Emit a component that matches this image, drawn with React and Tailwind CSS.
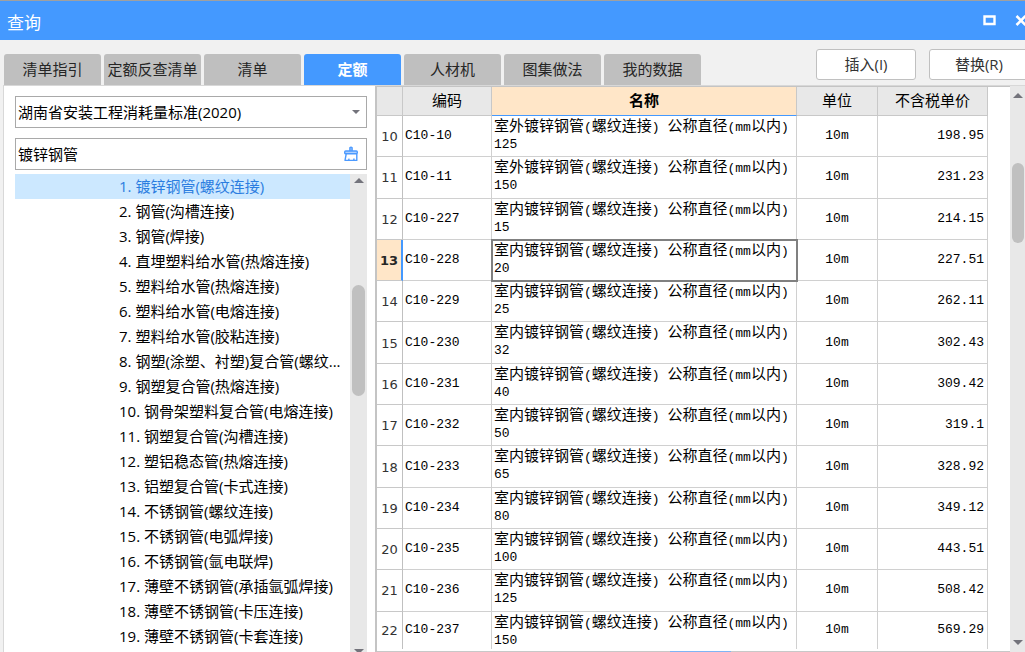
import React, { useState } from "react";

const tabs = ["清单指引", "定额反查清单", "清单", "定额", "人材机", "图集做法", "我的数据"];

const chapters = [
  "镀锌钢管(螺纹连接)",
  "钢管(沟槽连接)",
  "钢管(焊接)",
  "直埋塑料给水管(热熔连接)",
  "塑料给水管(热熔连接)",
  "塑料给水管(电熔连接)",
  "塑料给水管(胶粘连接)",
  "钢塑(涂塑、衬塑)复合管(螺纹...",
  "钢塑复合管(热熔连接)",
  "钢骨架塑料复合管(电熔连接)",
  "钢塑复合管(沟槽连接)",
  "塑铝稳态管(热熔连接)",
  "铝塑复合管(卡式连接)",
  "不锈钢管(螺纹连接)",
  "不锈钢管(电弧焊接)",
  "不锈钢管(氩电联焊)",
  "薄壁不锈钢管(承插氩弧焊接)",
  "薄壁不锈钢管(卡压连接)",
  "薄壁不锈钢管(卡套连接)",
];

const rows = [
  { no: 10, code: "C10-10", place: "室外", size: "125", price: "198.95" },
  { no: 11, code: "C10-11", place: "室外", size: "150", price: "231.23" },
  { no: 12, code: "C10-227", place: "室内", size: "15", price: "214.15" },
  { no: 13, code: "C10-228", place: "室内", size: "20", price: "227.51" },
  { no: 14, code: "C10-229", place: "室内", size: "25", price: "262.11" },
  { no: 15, code: "C10-230", place: "室内", size: "32", price: "302.43" },
  { no: 16, code: "C10-231", place: "室内", size: "40", price: "309.42" },
  { no: 17, code: "C10-232", place: "室内", size: "50", price: "319.1" },
  { no: 18, code: "C10-233", place: "室内", size: "65", price: "328.92" },
  { no: 19, code: "C10-234", place: "室内", size: "80", price: "349.12" },
  { no: 20, code: "C10-235", place: "室内", size: "100", price: "443.51" },
  { no: 21, code: "C10-236", place: "室内", size: "125", price: "508.42" },
  { no: 22, code: "C10-237", place: "室内", size: "150", price: "569.29" },
];

// Half-width characters use the mono face, Chinese keeps the larger size
function MixedText({ text }) {
  return text.split(/([\x20-\x7e]+)/).map((part, i) =>
    i % 2 === 1 ? (
      <span key={i} className="text-[13px] whitespace-pre">{part}</span>
    ) : (
      part
    )
  );
}

function Arrow({ down, className }) {
  return (
    <svg viewBox="0 0 10 5" className={className} aria-hidden="true">
      <path d={down ? "M0 0h10L5 5z" : "M0 5h10L5 0z"} fill="#73737b" />
    </svg>
  );
}

function BroomIcon() {
  return (
    <svg viewBox="0 0 16 16" className="w-4 h-4" fill="none" stroke="#4c9aff" strokeWidth="1.4" strokeLinejoin="round" aria-hidden="true">
      <path d="M6.9 5V1.800Q8 .4 9.100 1.800V5" fill="#4c9aff" fillOpacity=".5" />
      <rect x="1.700" y="5" width="12.600" height="2.800" rx="1" fill="#4c9aff" fillOpacity=".45" />
      <path d="M3.200 8L2 14.400h11.800V8M5.600 14.200l.5-1.600M10.600 14.200l.6-1.600" />
    </svg>
  );
}

function TitleBar() {
  return (
    <header className="h-10 shrink-0 flex items-center justify-between bg-[#4499ff] border-t border-[#a0a0a0] pl-[7px] text-white">
      <h1 className="text-[17px] leading-6 pt-1">查询</h1>
      <div className="flex items-center gap-[19px] -mr-0.5">
        <button type="button" aria-label="最大化" className="w-[13px] h-3">
          <svg viewBox="0 0 13 12" className="w-full h-full"><path d="M1.500 1.500h10v7.500h-10z" fill="none" stroke="white" strokeWidth="2.400" /></svg>
        </button>
        <button type="button" aria-label="关闭" className="w-3 h-3">
          <svg viewBox="0 0 12 12" className="w-full h-full"><path d="M1.500 1l9 9M10.500 1l-9 9" stroke="white" strokeWidth="2.600" /></svg>
        </button>
      </div>
    </header>
  );
}

function SidePanel() {
  const [keyword, setKeyword] = useState("镀锌钢管");
  const [current, setCurrent] = useState(0);

  return (
    <aside className="w-[363px] shrink-0 flex flex-col pl-[11px] pt-[10px]">
      <div className="relative h-8 mb-[10px] shrink-0">
        <select aria-label="定额库" className="appearance-none w-full h-full border border-[#a9a9a9] bg-white pl-0.5 pr-6">
          <option>湖南省安装工程消耗量标准(2020)</option>
        </select>
        <Arrow down className="absolute right-[7px] top-[14px] w-2 h-1 pointer-events-none" />
      </div>
      <div className="h-8 mb-1 shrink-0 flex items-center border border-[#a9a9a9] pl-0.5 pr-[7px]">
        <input
          aria-label="搜索"
          value={keyword}
          onChange={(e) => setKeyword(e.target.value)}
          className="flex-1 min-w-0 h-full pb-0.5 outline-none"
        />
        <button type="button" aria-label="清除" onClick={() => setKeyword("")}><BroomIcon /></button>
      </div>
      <div className="flex-1 min-h-0 flex">
        <ul className="flex-1 min-w-0 overflow-hidden">
          {chapters.map((name, i) => (
            <li key={name}>
              <button
                type="button"
                onClick={() => setCurrent(i)}
                className={`block w-full h-[25px] pl-[104px] pb-0.5 text-left whitespace-nowrap ${i === current ? "bg-[#cce8ff] text-[#2b7de0]" : ""}`}
              >
                {i + 1}. {name}
              </button>
            </li>
          ))}
        </ul>
        <div className="w-[17px] flex flex-col items-center bg-[#e8e8e8] pt-1">
          <Arrow className="w-[10px] h-[5px]" />
          <div className="w-[13px] h-[111px] mt-[102px] rounded-full bg-[#c0c0c0]" />
          <Arrow down className="w-[10px] h-[5px] mt-auto -mb-0.5" />
        </div>
      </div>
    </aside>
  );
}

function QuotaTable() {
  const [selected, setSelected] = useState(13);
  const head = "border-r border-b border-[#c8c8c8] bg-[#e8e8e8] font-normal pt-1";
  const cell = "border-r border-[#d0d0d0]";

  return (
    <table className="w-full h-full table-fixed border-separate border-spacing-0 font-['Liberation_Mono','Noto_Sans_CJK_SC',monospace]">
      <colgroup>
        <col className="w-[26px]" />
        <col className="w-[89px]" />
        <col />
        <col className="w-[81px]" />
        <col className="w-[110px]" />
      </colgroup>
      <thead>
        <tr className="h-[29px]">
          <th className={head} aria-label="序号" />
          <th className={head}>编码</th>
          <th className="border-r border-r-[#c8c8c8] border-b border-b-[#4499ff] bg-[#ffe6c8] font-bold pt-1">名称</th>
          <th className={head}>单位</th>
          <th className={head}>不含税单价</th>
        </tr>
      </thead>
      <tbody>
        {rows.map((row, i) => {
          const active = row.no === selected;
          const last = i === rows.length - 1;
          const line = last ? "" : "border-b";
          return (
            <tr key={row.no} onClick={() => setSelected(row.no)} className={last ? "h-[37px]" : "h-[41px]"}>
              <td
                className={`${line} border-b-[#c8c8c8] text-center text-[13px] pt-0.5 font-['DejaVu_Sans',sans-serif] ${
                  active ? "border-r-2 border-r-[#4499ff] bg-[#ffe6c8] font-bold text-[#262626]" : "border-r border-r-[#c0c0c0] text-[#333333]"
                }`}
              >
                {row.no}
              </td>
              <td className={`${cell} ${line} pl-0.5 text-[13px]`}>{row.code}</td>
              <td
                className={`${cell} ${line} pl-0.5 pt-[3px] align-top leading-[17px] whitespace-nowrap ${
                  active ? "outline-2 -outline-offset-1 outline-[#808080]" : ""
                }`}
              >
                <MixedText text={`${row.place}镀锌钢管(螺纹连接) 公称直径(mm以内)`} />
                <br />
                <MixedText text={row.size} />
              </td>
              <td className={`${cell} ${line} text-center text-[13px]`}>10m</td>
              <td className={`${cell} ${line} pr-[3px] text-right text-[13px]`}>{row.price}</td>
            </tr>
          );
        })}
      </tbody>
    </table>
  );
}

export default function App() {
  const [tab, setTab] = useState("定额");

  return (
    <div className="h-screen flex flex-col overflow-hidden bg-[#f1f1f1] text-[15px] leading-5 text-black font-['Open_Sans','Noto_Sans_CJK_SC',sans-serif]">
      <TitleBar />
      <div className="h-[45px] shrink-0 flex items-end justify-between pl-1">
        <nav className="flex gap-[3px]">
          {tabs.map((name) => (
            <button
              key={name}
              type="button"
              onClick={() => setTab(name)}
              className={`w-[97px] h-[31px] pb-0.5 rounded-t-[3px] whitespace-nowrap ${
                name === tab ? "bg-[#4499ff] text-white font-bold" : "bg-[#bfbfbf] text-[#262626]"
              }`}
            >
              {name}
            </button>
          ))}
        </nav>
        <div className="flex gap-[13px] -mr-1 pb-[5px]">
          <button type="button" className="w-[100px] h-[31px] pb-0.5 rounded-[3px] border border-[#c0c0c0] bg-white text-[#333333]">插入(I)</button>
          <button type="button" className="w-[100px] h-[31px] pb-0.5 rounded-[3px] border border-[#c0c0c0] bg-white text-[#333333]">替换(R)</button>
        </div>
      </div>
      <main className="flex-1 min-h-0 flex ml-[3px] bg-white border-t border-l border-[#d8d8d8]">
        <SidePanel />
        <section className="flex-1 min-w-0 flex ml-2">
          <div className="flex-1 min-w-0 flex flex-col border-t border-l-2 border-[#c4c4c4]">
            <div className="flex-1 min-h-0 overflow-hidden pr-[22px] pb-0.5">
              <QuotaTable />
            </div>
            <div className="h-px bg-[#c8c8c8] flex justify-center pl-[14px]">
              <div className="w-[61px] h-px bg-[#7fb5f5]" />
            </div>
          </div>
          <div className="w-[15px] flex flex-col items-center bg-[#e8e8e8] pt-[7px] pb-[7px]">
            <Arrow className="w-[10px] h-[5px]" />
            <div className="w-3 h-20 mt-[65px] rounded-full bg-[#c0c0c0]" />
            <Arrow down className="w-[10px] h-[5px] mt-auto" />
          </div>
        </section>
      </main>
    </div>
  );
}
